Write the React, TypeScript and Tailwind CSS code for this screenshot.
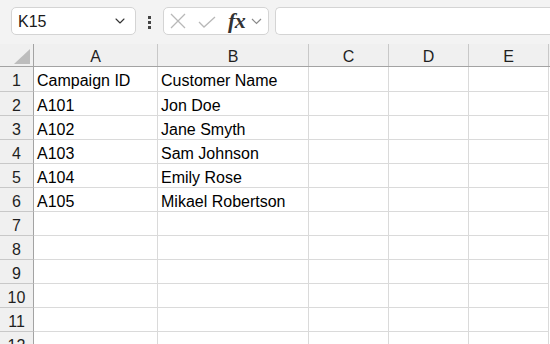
import { ChevronDown } from 'lucide-react';

const columns = [
  { label: 'A', width: 'w-[124px]' },
  { label: 'B', width: 'w-[151px]' },
  { label: 'C', width: 'w-[80px]' },
  { label: 'D', width: 'w-[80px]' },
  { label: 'E', width: 'w-[80px]' },
];

const data: string[][] = [
  ['Campaign ID', 'Customer Name'],
  ['A101', 'Jon Doe'],
  ['A102', 'Jane Smyth'],
  ['A103', 'Sam Johnson'],
  ['A104', 'Emily Rose'],
  ['A105', 'Mikael Robertson'],
];

const rows = Array.from({ length: 12 }, (_, i) => i + 1);

const Toolbar = () => {
  return (
    <div className="flex items-start h-[44px] bg-[#f3f3f3] pt-[7px] pl-[11px]">
      <div className="flex items-center justify-between w-[125px] h-[28px] bg-white border border-[#d4d4d4] rounded-[5px] pl-[6px] pr-[7px]">
        <span className="text-[16px] text-[#1a1a1a] pt-[1px]">K15</span>
        <ChevronDown className="w-[16px] h-[16px] text-[#333]" strokeWidth={1.6} />
      </div>
      <div className="flex flex-col items-center gap-[2px] w-[27px] pt-[9px]">
        <span className="block w-[3px] h-[3px] bg-[#444]" />
        <span className="block w-[3px] h-[3px] bg-[#444]" />
        <span className="block w-[3px] h-[3px] bg-[#444]" />
      </div>
      <div className="flex items-center w-[106px] h-[28px] bg-white border border-[#d4d4d4] rounded-[5px] pl-[6px]">
        <svg width="16" height="16" viewBox="0 0 16 16" className="text-[#b8b8b8]">
          <path d="M1 1L15 15M15 1L1 15" stroke="currentColor" strokeWidth="1.3" fill="none" />
        </svg>
        <svg width="18" height="12" viewBox="0 0 18 12" className="ml-[12px] mt-[2px] text-[#b8b8b8]">
          <path d="M1 6L6 11L17 1" stroke="currentColor" strokeWidth="1.3" fill="none" />
        </svg>
        <span className="ml-[12px] text-[22px] italic font-bold text-[#333] font-['Liberation_Serif',serif] leading-none tracking-[-0.5px]">
          fx
        </span>
        <svg width="11" height="7" viewBox="0 0 11 7" className="ml-[6px] mt-[1px] text-[#8a8a8a]">
          <path d="M1 1L5.5 5.5L10 1" stroke="currentColor" strokeWidth="1.2" fill="none" />
        </svg>
      </div>
      <div className="ml-[6px] flex-1 h-[28px] bg-white border border-[#d4d4d4] border-r-0 rounded-l-[5px]" />
    </div>
  );
};

const App = () => {
  return (
    <div className="w-[550px] h-[344px] overflow-hidden bg-white font-['Liberation_Sans',Arial,sans-serif]">
      <Toolbar />
      <div className="flex h-[23px] bg-[#f0f0f0] border-b border-[#a3a3a3]">
        <div className="relative w-[34px] border-r border-[#a3a3a3]">
          <div className="absolute left-[14px] top-[5px] w-[16px] h-[15px] bg-[#bdbdbd] [clip-path:polygon(100%_0,100%_100%,0_100%)]" />
        </div>
        {columns.map((c) => (
          <div
            key={c.label}
            className={`${c.width} flex items-center justify-center border-r border-[#c8c8c8] text-[16px] text-[#1f1f1f] pt-[4px]`}
          >
            {c.label}
          </div>
        ))}
      </div>
      {rows.map((r) => (
        <div key={r} className={`flex ${r === 1 ? 'h-[25px]' : 'h-[24px]'}`}>
          <div className="w-[34px] flex items-center justify-center bg-[#f0f0f0] border-r border-b border-r-[#a3a3a3] border-b-[#c8c8c8] text-[16px] text-[#1f1f1f] pt-[4px]">
            {r}
          </div>
          {columns.map((c, ci) => (
            <div
              key={c.label}
              className={`${c.width} flex items-center pl-[3px] border-r border-b border-[#dadada] text-[16px] text-black whitespace-nowrap overflow-hidden pt-[4px]`}
            >
              {data[r - 1]?.[ci] ?? ''}
            </div>
          ))}
        </div>
      ))}
    </div>
  );
};

export default App;
